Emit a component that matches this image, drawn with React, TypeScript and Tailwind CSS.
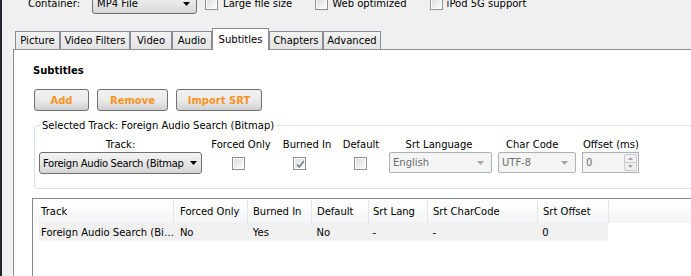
import type { ReactNode } from 'react';

const tabs = [
  { label: 'Picture', w: 'w-[45px]' },
  { label: 'Video Filters', w: 'w-[70px]' },
  { label: 'Video', w: 'w-[42px]' },
  { label: 'Audio', w: 'w-[40px]' },
  { label: 'Subtitles', w: 'w-[57px]', active: true },
  { label: 'Chapters', w: 'w-[54px]' },
  { label: 'Advanced', w: 'w-[58px]' },
];

const columns = [
  { label: 'Track', w: 'w-[140px]', pad: 'pl-[7px]' },
  { label: 'Forced Only', w: 'w-[74px]', pad: 'pl-[6px]' },
  { label: 'Burned In', w: 'w-[64px]', pad: 'pl-[5px]' },
  { label: 'Default', w: 'w-[57px]', pad: 'pl-[5px]' },
  { label: 'Srt Lang', w: 'w-[59px]', pad: 'pl-[4px]' },
  { label: 'Srt CharCode', w: 'w-[110px]', pad: 'pl-[5px]' },
  { label: 'Srt Offset', w: 'w-[71px]', pad: 'pl-[5px]' },
];

const rowCells = ['No', 'Yes', 'No', '-', '-', '0'];

function Arrow({ disabled }: { disabled?: boolean }) {
  return (
    <svg width="7" height="4" viewBox="0 0 7 4" className="shrink-0">
      <path d="M0 0h7L3.5 4z" fill={disabled ? '#a6a6a6' : '#000'} />
    </svg>
  );
}

function Check({ checked, className = '' }: { checked?: boolean; className?: string }) {
  return (
    <div
      className={`w-[13px] h-[13px] border border-[#8e8f8f] bg-white p-px shrink-0 ${className}`}
    >
      <div className="relative w-full h-full bg-gradient-to-br from-[#dcdcdc] to-[#fbfbfb]">
        {checked && (
          <svg className="absolute inset-0" width="11" height="11" viewBox="0 0 11 11">
            <path d="M2 5.5l2.2 2.5L9 2" fill="none" stroke="#6f7f9b" strokeWidth="1.6" />
          </svg>
        )}
      </div>
    </div>
  );
}

function ButtonCombo({
  children,
  className = '',
  textClass = '',
}: {
  children: ReactNode;
  className?: string;
  textClass?: string;
}) {
  return (
    <div
      className={`flex items-center justify-between border border-[#707070] rounded-[3px] bg-gradient-to-b from-[#f2f2f2] via-[#e8e8e8] to-[#d4d4d4] pl-[3px] pr-[4px] ${className}`}
    >
      <span className={`min-w-0 whitespace-nowrap overflow-hidden ${textClass}`}>{children}</span>
      <Arrow />
    </div>
  );
}

function DisabledCombo({ children, className = '' }: { children: ReactNode; className?: string }) {
  return (
    <div
      className={`flex items-center justify-between border border-[#adb2b5] rounded-[2px] bg-[#f4f4f4] text-[#6d6d6d] pl-[3px] pr-[7px] ${className}`}
    >
      <span>{children}</span>
      <Arrow disabled />
    </div>
  );
}

function PushButton({ children, className = '' }: { children: ReactNode; className?: string }) {
  return (
    <div
      className={`flex items-center justify-center h-[22px] border border-[#707070] rounded-[3px] bg-gradient-to-b from-[#f2f2f2] via-[#ebebeb] to-[#cfcfcf] font-bold text-[#f7931e] ${className}`}
    >
      {children}
    </div>
  );
}

export default function App() {
  return (
    <div className="relative w-[691px] h-[276px] overflow-hidden bg-[#f0f0f0] border-l-2 border-[#1f232b] font-['DejaVu_Sans',sans-serif] text-[10px] text-black">
      {/* container row, mostly cut off at the top */}
      <div className="flex items-center h-[21px] -mt-[7px] ml-[26px]">
        <span>Container:</span>
        <ButtonCombo className="ml-[12px] w-[105px] h-[21px] pl-[4px] pr-[6px]">MP4 File</ButtonCombo>
        <Check className="ml-[8px]" />
        <span className="ml-[5px]">Large file size</span>
        <Check className="ml-[23px]" />
        <span className="ml-[4px]">Web optimized</span>
        <Check className="ml-[23px]" />
        <span className="ml-[4px]">iPod 5G support</span>
      </div>

      <div className="ml-[11px] mt-[14px]">
        {/* tab strip */}
        <div className="relative z-10 flex items-end h-[21px] pl-[2px]">
          {tabs.map((tab) =>
            tab.active ? (
              <div
                key={tab.label}
                className={`${tab.w} h-[22px] -mb-px flex items-start justify-center pt-[3px] border border-b-0 border-[#898c95] bg-white`}
              >
                {tab.label}
              </div>
            ) : (
              <div
                key={tab.label}
                className={`${tab.w} h-[18px] flex items-center justify-center border border-b-0 border-[#898c95] bg-gradient-to-b from-[#f3f3f3] to-[#e3e3e3]`}
              >
                {tab.label}
              </div>
            ),
          )}
        </div>

        {/* tab page */}
        <div className="w-[720px] h-[240px] border-l border-t border-[#898c95] bg-white pl-[19px] pt-[14px]">
          <div className="font-bold h-[13px] leading-[13px]">Subtitles</div>

          <div className="flex mt-[12px] ml-px">
            <PushButton className="w-[55px]">Add</PushButton>
            <PushButton className="w-[71px] ml-[8px]">Remove</PushButton>
            <PushButton className="w-[86px] ml-[8px]">Import SRT</PushButton>
          </div>

          <fieldset className="w-[680px] mt-[8px] ml-px border border-[#d5dfe5] rounded-[3px] pb-[14px]">
            <legend className="ml-[5px] px-[2px] leading-[13px]">
              Selected Track: Foreign Audio Search (Bitmap)
            </legend>

            <div className="flex mt-[5px]">
              <div className="flex flex-col ml-[4px] w-[163px]">
                <div className="text-center h-[14px]">Track:</div>
                <ButtonCombo className="mt-[1px] h-[22px]" textClass="tracking-[-0.3px]">
                  Foreign Audio Search (Bitmap
                </ButtonCombo>
              </div>
              <div className="flex flex-col ml-[8px] w-[62px]">
                <div className="text-center h-[14px] whitespace-nowrap">Forced Only</div>
                <div className="flex items-center h-[22px] mt-[1px]">
                  <Check className="ml-[22px]" />
                </div>
              </div>
              <div className="flex flex-col ml-[9px] w-[52px]">
                <div className="text-center h-[14px] whitespace-nowrap">Burned In</div>
                <div className="flex items-center h-[22px] mt-[1px]">
                  <Check checked className="ml-[12px]" />
                </div>
              </div>
              <div className="flex flex-col ml-[8px] w-[40px]">
                <div className="text-center h-[14px]">Default</div>
                <div className="flex items-center h-[22px] mt-[1px]">
                  <Check className="ml-[13px]" />
                </div>
              </div>
              <div className="flex flex-col ml-[8px] w-[103px]">
                <div className="text-center h-[14px] pr-[3px]">Srt Language</div>
                <DisabledCombo className="mt-[1px] h-[21px]">English</DisabledCombo>
              </div>
              <div className="flex flex-col ml-[6px] w-[78px]">
                <div className="h-[14px] pl-[8px] whitespace-nowrap">Char Code</div>
                <DisabledCombo className="mt-[1px] h-[21px]">UTF-8</DisabledCombo>
              </div>
              <div className="flex flex-col ml-[6px] w-[57px]">
                <div className="h-[14px] pl-px whitespace-nowrap">Offset (ms)</div>
                <div className="mt-[1px] h-[21px] flex border border-[#adb2b5] bg-[#f4f4f4] text-[#6d6d6d]">
                  <span className="flex-1 pl-[3px] leading-[19px]">0</span>
                  <div className="flex flex-col w-[13px] my-px mr-px border border-[#c9cccf] rounded-[2px] bg-[#f0f0f0]">
                    <div className="flex-1 flex items-center justify-center border-b border-[#c9cccf]">
                      <svg width="5" height="3" viewBox="0 0 5 3">
                        <path d="M0 3h5L2.5 0z" fill="#a6a6a6" />
                      </svg>
                    </div>
                    <div className="flex-1 flex items-center justify-center">
                      <svg width="5" height="3" viewBox="0 0 5 3">
                        <path d="M0 0h5L2.5 3z" fill="#a6a6a6" />
                      </svg>
                    </div>
                  </div>
                </div>
              </div>
            </div>
          </fieldset>

          {/* subtitle list */}
          <div className="mt-[9px] -ml-px w-[700px] h-[100px] border-l border-t border-[#828790] bg-white pt-px pl-px">
            <div className="flex h-[23px] bg-gradient-to-b from-white to-[#f4f5f6]">
              {columns.map((col) => (
                <div
                  key={col.label}
                  className={`${col.w} ${col.pad} flex items-center border-r border-[#e3e5e8] whitespace-nowrap`}
                >
                  {col.label}
                </div>
              ))}
            </div>
            <div className="flex h-[18px] ml-[5px] w-[569px] bg-[#f0f0f0] items-center">
              <div className="w-[135px] pl-[2px] whitespace-nowrap">Foreign Audio Search (Bi…</div>
              {rowCells.map((cell, i) => (
                <div key={i} className={`${columns[i + 1].w} ${columns[i + 1].pad}`}>
                  {cell}
                </div>
              ))}
            </div>
          </div>
        </div>
      </div>
    </div>
  );
}
